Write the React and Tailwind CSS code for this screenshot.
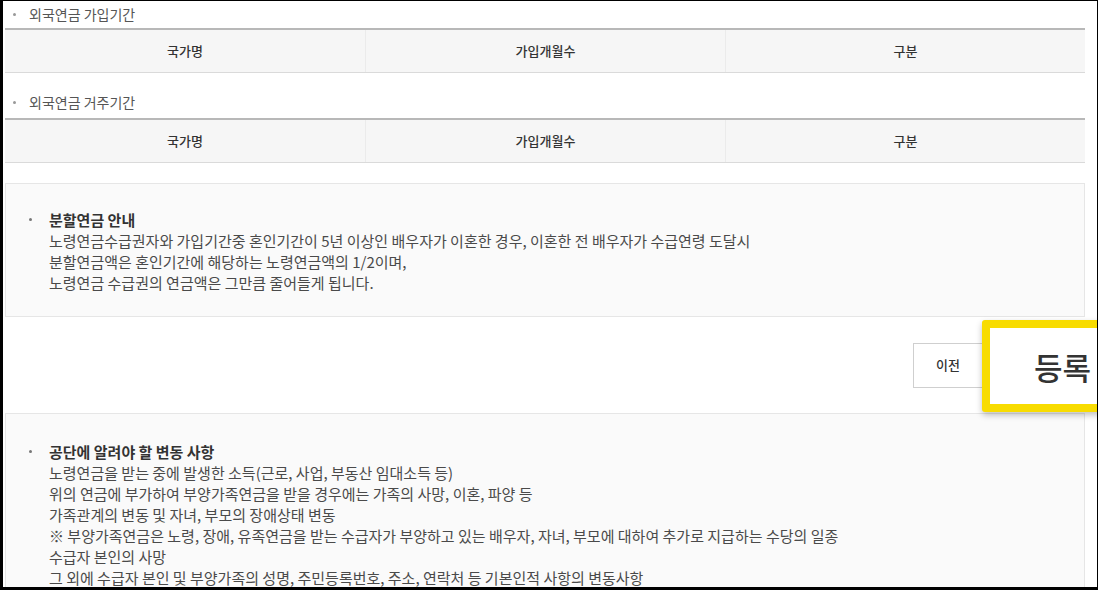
// App.jsx
const FONT = { fontFamily: '"Noto Sans CJK KR", "Noto Sans", sans-serif' }

const cols = ['국가명', '가입개월수', '구분']

function SectionTitle({ children, className }) {
  return (
    <div className={`flex items-end ${className}`}>
      <div className="flex items-center leading-[16px] text-[14px] text-[#555]">
        <span className="ml-[8px] mr-[13px] inline-block h-[3px] w-[3px] rounded-full bg-[#999]" />
        {children}
      </div>
    </div>
  )
}

function HeadTable() {
  return (
    <div className="border-t-2 border-b border-t-[#b8b8b8] border-b-[#dadada]">
      <div className="grid h-[42px] grid-cols-3 bg-[#f6f6f6]">
        {cols.map((c, i) => (
          <div
            key={c}
            className={`flex items-center justify-center text-[13px] font-medium text-[#333] ${
              i > 0 ? 'border-l border-[#ebebeb]' : ''
            }`}
          >
            {c}
          </div>
        ))}
      </div>
    </div>
  )
}

function NoticeBox({ title, lines, className }) {
  return (
    <div className={`border border-[#e6e6e6] bg-[#fafafa] pl-[21px] ${className}`}>
      <div className="flex text-[15px] leading-[21px]">
        <span className="flex h-[21px] w-[22px] items-center">
          <span className="ml-[2px] inline-block h-[3px] w-[3px] rounded-full bg-[#777]" />
        </span>
        <div>
          <p className="font-bold text-[#333]">{title}</p>
          {lines.map((l) => (
            <p key={l} className="whitespace-nowrap text-[#4a4a4a]">
              {l}
            </p>
          ))}
        </div>
      </div>
    </div>
  )
}

export default function App() {
  return (
    <div className="h-[590px] w-[1098px] overflow-hidden bg-black pb-[3px] pl-[3px] pr-px pt-px" style={FONT}>
      <div className="relative h-full overflow-hidden bg-white pl-[2px] pr-[12px]">
        <SectionTitle className="h-[27px] pb-[6px]">외국연금 가입기간</SectionTitle>
        <HeadTable />

        <SectionTitle className="h-[45px] pb-[8px]">외국연금 거주기간</SectionTitle>
        <HeadTable />

        <NoticeBox
          className="mt-[20px] h-[134px] pt-[25px]"
          title="분할연금 안내"
          lines={[
            '노령연금수급권자와 가입기간중 혼인기간이 5년 이상인 배우자가 이혼한 경우, 이혼한 전 배우자가 수급연령 도달시',
            '분할연금액은 혼인기간에 해당하는 노령연금액의 1/2이며,',
            '노령연금 수급권의 연금액은 그만큼 줄어들게 됩니다.',
          ]}
        />

        {/* 버튼 영역 */}
        <div className="relative flex h-[96px] items-center justify-end">
          <button
            type="button"
            className="h-[45px] w-[70px] border border-[#cfcfcf] bg-white text-[13px] font-medium text-[#333]"
          >
            이전
          </button>
          <button type="button" className="h-[45px] w-[102px] bg-white" />

          {/* 강조 표시 */}
          <div className="absolute left-[977px] top-[3px] flex h-[92px] w-[140px] items-center rounded-[3px] border-[8px] border-[#f8dc00] bg-white pl-[44px] shadow-[0_3px_6px_rgba(0,0,0,0.25)]">
            <span className="text-[31px] font-medium leading-none text-[#333]">등록</span>
          </div>
        </div>

        <NoticeBox
          className="h-[200px] pt-[27px]"
          title="공단에 알려야 할 변동 사항"
          lines={[
            '노령연금을 받는 중에 발생한 소득(근로, 사업, 부동산 임대소득 등)',
            '위의 연금에 부가하여 부양가족연금을 받을 경우에는 가족의 사망, 이혼, 파양 등',
            '가족관계의 변동 및 자녀, 부모의 장애상태 변동',
            '※ 부양가족연금은 노령, 장애, 유족연금을 받는 수급자가 부양하고 있는 배우자, 자녀, 부모에 대하여 추가로 지급하는 수당의 일종',
            '수급자 본인의 사망',
            '그 외에 수급자 본인 및 부양가족의 성명, 주민등록번호, 주소, 연락처 등 기본인적 사항의 변동사항',
          ]}
        />
      </div>
    </div>
  )
}
